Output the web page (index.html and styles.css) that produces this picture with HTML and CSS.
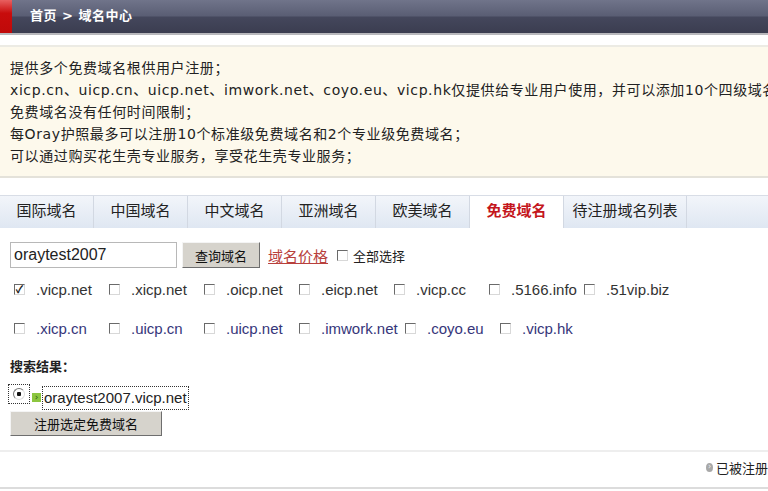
FILE: index.html
```html
<!DOCTYPE html>
<html lang="zh-CN">
  <head>
    <meta charset="UTF-8" />
    <meta name="viewport" content="width=device-width, initial-scale=1.0" />
    <title>域名中心 - 免费域名</title>
    <link rel="stylesheet" href="styles.css">
  </head>

  <body>
    <div class="topbar">
      <div class="topbar-red"></div>
      <div class="topbar-title">首页 &gt; 域名中心</div>
    </div>

    <div class="notice">
      <p>提供多个免费域名根供用户注册；</p>
      <p>xicp.cn、uicp.cn、uicp.net、imwork.net、coyo.eu、vicp.hk仅提供给专业用户使用，并可以添加10个四级域名</p>
      <p>免费域名没有任何时间限制；</p>
      <p>每Oray护照最多可以注册10个标准级免费域名和2个专业级免费域名；</p>
      <p>可以通过购买花生壳专业服务，享受花生壳专业服务；</p>
    </div>

    <ul class="tabs">
      <li>国际域名</li>
      <li>中国域名</li>
      <li>中文域名</li>
      <li>亚洲域名</li>
      <li>欧美域名</li>
      <li class="active">免费域名</li>
      <li class="wide">待注册域名列表</li>
    </ul>

    <div class="search-row">
      <input class="search-input" type="text" value="oraytest2007" />
      <button class="btn">查询域名</button>
      <a class="price-link" href="#">域名价格</a>
      <span class="check-all"><span class="box"></span>全部选择</span>
    </div>

    <div class="domains">
      <label class="item"><span class="box checked">&#10003;</span>.vicp.net</label>
      <label class="item"><span class="box"></span>.xicp.net</label>
      <label class="item"><span class="box"></span>.oicp.net</label>
      <label class="item"><span class="box"></span>.eicp.net</label>
      <label class="item"><span class="box"></span>.vicp.cc</label>
      <label class="item"><span class="box"></span>.5166.info</label>
      <label class="item"><span class="box"></span>.51vip.biz</label>
    </div>

    <div class="domains pro">
      <label class="item"><span class="box"></span>.xicp.cn</label>
      <label class="item"><span class="box"></span>.uicp.cn</label>
      <label class="item"><span class="box"></span>.uicp.net</label>
      <label class="item item-wide"><span class="box"></span>.imwork.net</label>
      <label class="item"><span class="box"></span>.coyo.eu</label>
      <label class="item"><span class="box"></span>.vicp.hk</label>
    </div>

    <div class="result">
      <h4>搜索结果：</h4>
      <div class="result-row">
        <span class="radio-wrap"><span class="radio"></span></span>
        <span class="arrow">&#8250;</span>
        <span class="result-name">oraytest2007.vicp.net</span>
      </div>
      <button class="btn btn-reg">注册选定免费域名</button>
    </div>

    <div class="footer">
      <span class="legend"><span class="dot">&#8250;</span>已被注册</span>
    </div>
  </body>
</html>
```

FILE: styles.css
```css
html, body {
  margin: 0;
  padding: 0;
  overflow: hidden;
}

body {
  width: 768px;
  height: 491px;
  background: #fff;
  color: #222;
  font-family: "DejaVu Sans", "Noto Sans CJK SC", sans-serif;
  white-space: nowrap;
}

.topbar {
  display: flex;
  height: 33px;
  border-bottom: 2px solid #b8b8bc;
}

.topbar-red {
  width: 12px;
  background: linear-gradient(#e86060, #c80c0c 40%, #c00a0a);
}

.topbar-title {
  flex: 1;
  padding-left: 18px;
  line-height: 32px;
  color: #fff;
  font-size: 13px;
  font-weight: bold;
  letter-spacing: 0.5px;
  background: linear-gradient(#70748a 0, #5a5e74 48%, #44475c 52%, #3b3d50 100%);
}

.notice {
  margin-top: 10px;
  padding: 10px 10px 9px;
  background: #fdf9ec;
  border-top: 2px solid #ecebe4;
  border-bottom: 2px solid #e4e2da;
  font-size: 14px;
  letter-spacing: 0.6px;
  color: #222;
}

.notice p {
  margin: 0;
  line-height: 22px;
}

.tabs {
  display: flex;
  list-style: none;
  margin: 17px 0 0;
  padding: 0;
  height: 32px;
  border-top: 1px solid #d8dde6;
  background: linear-gradient(#f2f5fa, #dfe7f2);
}

.tabs li {
  width: 94px;
  box-sizing: border-box;
  border-right: 1px solid #d2d8e2;
  text-align: center;
  line-height: 31px;
  font-size: 15px;
  color: #222;
}

.tabs li.active {
  background: #fff;
  color: #c4161c;
  font-weight: bold;
}

.tabs li.wide {
  width: 123px;
}

.search-row {
  display: flex;
  align-items: center;
  padding: 14px 0 0 10px;
  height: 26px;
}

.search-input {
  width: 167px;
  height: 26px;
  box-sizing: border-box;
  border: 1px solid #b8b8b8;
  padding: 0 3px;
  font-family: "Liberation Sans", sans-serif;
  font-size: 16px;
  color: #222;
}

.btn {
  height: 26px;
  margin-left: 5px;
  padding: 0 12px;
  background: #d6d3cc;
  border: 1px solid;
  border-color: #f4f4f4 #6e6e6e #6e6e6e #f4f4f4;
  font-family: "Noto Sans CJK SC", sans-serif;
  font-size: 13px;
  color: #111;
}

.price-link {
  margin-left: 8px;
  color: #b8403c;
  font-size: 15px;
  text-decoration: underline;
  text-decoration-color: #b8403c;
}

.check-all {
  display: flex;
  align-items: center;
  margin-left: 9px;
  font-size: 13px;
}

.box {
  display: inline-block;
  width: 11px;
  height: 11px;
  box-sizing: border-box;
  margin-right: 5px;
  border: 1px solid;
  border-color: #6a6a6a #d8d8d8 #d8d8d8 #6a6a6a;
  background: #fff;
  font-size: 10px;
  line-height: 9px;
  text-align: center;
  color: #222;
  font-weight: bold;
}

.domains {
  display: flex;
  padding: 11px 0 0 14px;
  height: 20px;
  font-family: "Liberation Sans", sans-serif;
  font-size: 15px;
  color: #333;
}

.domains.pro {
  padding-top: 19px;
  color: #36367a;
}

.item {
  display: flex;
  align-items: center;
  width: 95px;
}

.item .box {
  margin-right: 11px;
}

.item-wide {
  width: 106px;
}

.result {
  padding: 20px 0 0 10px;
}

.result h4 {
  margin: 0;
  font-size: 13px;
  line-height: 18px;
  font-weight: bold;
}

.result-row {
  display: flex;
  align-items: center;
  margin-top: 9px;
  height: 24px;
}

.radio-wrap {
  display: flex;
  align-items: center;
  justify-content: center;
  width: 22px;
  height: 20px;
  box-sizing: border-box;
  border: 1px dotted #333;
  margin: -6px 0 0 -2px;
}

.radio {
  width: 12px;
  height: 12px;
  box-sizing: border-box;
  border-radius: 50%;
  border: 1px solid;
  border-color: #777 #ddd #ddd #777;
  background: radial-gradient(circle, #111 0, #111 2px, #fff 2.5px);
}

.arrow {
  width: 9px;
  height: 9px;
  margin: 0 1px 0 2px;
  background: #8cc63f;
  color: #2a5a10;
  font-size: 9px;
  line-height: 8px;
  text-align: center;
}

.result-name {
  padding: 1px 1px;
  border: 1px dotted #333;
  font-family: "Liberation Sans", sans-serif;
  font-size: 15px;
  line-height: 20px;
  margin-top: 2px;
}

.btn-reg {
  margin: 2px 0 0;
  width: 152px;
  height: 25px;
  font-size: 13px;
}

.footer {
  margin-top: 14px;
  border-top: 2px solid #eeeeee;
  border-bottom: 2px solid #dcdcdc;
  height: 35px;
  padding-left: 706px;
}

.legend {
  display: flex;
  align-items: center;
  height: 30px;
  font-size: 13px;
}

.dot {
  width: 9px;
  height: 9px;
  margin-right: 3px;
  border-radius: 50%;
  background: #a8a8a8;
  color: #eee;
  font-size: 8px;
  line-height: 8px;
  text-align: center;
}
```
